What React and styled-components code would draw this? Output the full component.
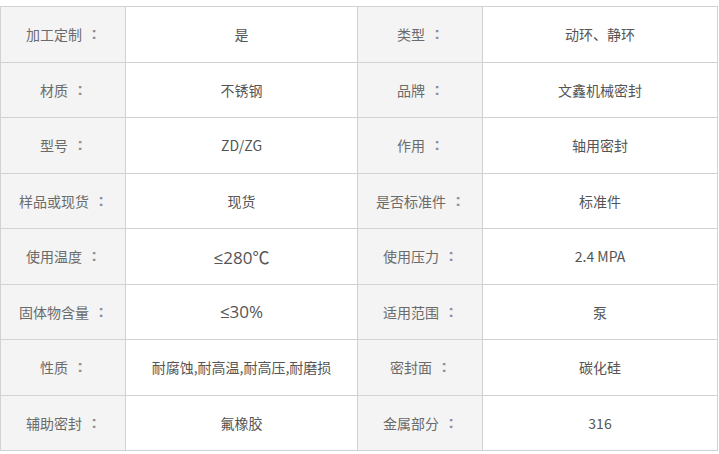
import React from 'react';
import styled, { createGlobalStyle } from 'styled-components';

const GlobalStyle = createGlobalStyle`
    html, body {
        margin: 0;
        padding: 0;
        background: #FFFFFF;
    }
    body {
        font-family: "Noto Sans CJK SC", "Microsoft YaHei", sans-serif;
    }
`

const Table = styled.div`
    margin-top: 6px;
    width: 718px;
    height: 445px;
    box-sizing: border-box;
    display: grid;
    grid-template-columns: 125px 232px 125px 235px;
    grid-template-rows: repeat(8, 1fr);
    border-top: 1px solid #d2d2d2;
    border-left: 1px solid #d2d2d2;
`

const Cell = styled.div`
    display: flex;
    align-items: center;
    justify-content: center;
    box-sizing: border-box;
    border-right: 1px solid #d2d2d2;
    border-bottom: 1px solid #d2d2d2;
    background: ${p => p.$label ? '#f4f4f4' : '#FFFFFF'};
    color: ${p => p.$label ? '#6b6b6b' : '#555555'};
    font-size: ${p => p.$big ? '17px' : '14px'};
    font-family: ${p => p.$big
        ? '"Open Sans", "Liberation Sans", "Noto Sans CJK SC", sans-serif'
        : '"Noto Sans CJK SC", sans-serif'};
    white-space: nowrap;
    .colon{
        display: inline-block;
        width: 12px;
        margin-left: 6px;
        text-align: center;
        color: #8e8e9c;
        font-size: 17px;
        font-weight: bold;
        font-family: "Liberation Sans", sans-serif;
    }
`

const rows = [
    ['加工定制', '是', '类型', '动环、静环'],
    ['材质', '不锈钢', '品牌', '文鑫机械密封'],
    ['型号', 'ZD/ZG', '作用', '轴用密封'],
    ['样品或现货', '现货', '是否标准件', '标准件'],
    ['使用温度', '≤280℃', '使用压力', '2.4 MPA'],
    ['固体物含量', '≤30%', '适用范围', '泵'],
    ['性质', '耐腐蚀,耐高温,耐高压,耐磨损', '密封面', '碳化硅'],
    ['辅助密封', '氟橡胶', '金属部分', '316'],
]

const isBig = v => v.startsWith('≤')

function App() {
    return (
        <>
            <GlobalStyle />
            <Table>
                {rows.map((r, i) => (
                    <React.Fragment key={i}>
                        <Cell $label>{r[0]}<span className="colon">:</span></Cell>
                        <Cell $big={isBig(r[1])}>{r[1]}</Cell>
                        <Cell $label>{r[2]}<span className="colon">:</span></Cell>
                        <Cell $big={isBig(r[3])}>{r[3]}</Cell>
                    </React.Fragment>
                ))}
            </Table>
        </>
    )
}

export default App
